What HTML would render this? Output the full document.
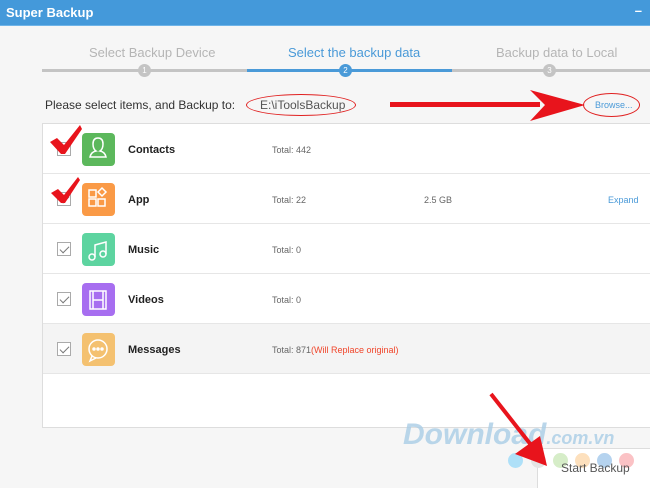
<!DOCTYPE html>
<html><head><meta charset="utf-8"><style>
*{margin:0;padding:0;box-sizing:border-box}
body{width:650px;height:484px;overflow:hidden;background:#f6f6f6;font-family:"Liberation Sans",sans-serif;position:relative}
.title{position:absolute;left:0;top:0;width:650px;height:26px;background:#4499da;color:#fff;font-weight:bold;font-size:13px;line-height:26px;padding-left:6px;border-bottom:1px solid #6fb4e8}
.a{position:absolute}
.step{font-size:13px;color:#b5b5b5;top:45px}
.list{position:absolute;left:42px;top:123px;width:620px;height:305px;background:#fff;border:1px solid #ddd}
.row{position:absolute;left:0;width:620px;height:50px;border-bottom:1px solid #e6e6e6}
.cb{position:absolute;left:14px;top:18px;width:14px;height:14px;border:1px solid #aaa;background:#fff}
.cb:after{content:"";position:absolute;left:4px;top:1px;width:4px;height:8px;border:solid #777;border-width:0 1px 1px 0;transform:rotate(45deg)}
.ic{position:absolute;left:39px;top:9px;width:33px;height:33px;border-radius:4px}
.nm{position:absolute;left:85px;top:20px;font-size:11px;font-weight:bold;color:#222}
.tt{position:absolute;left:229px;top:21px;font-size:9px;color:#666}
</style></head><body>
<div class="title">Super Backup<span style="position:absolute;right:8px;top:-2px">–</span></div>
<div class="a step" style="left:89px">Select Backup Device</div>
<div class="a step" style="left:288px;color:#4a9ad8">Select the backup data</div>
<div class="a step" style="left:496px">Backup data to Local</div>
<div class="a" style="left:42px;top:69px;width:205px;height:3px;background:#c4c4c4"></div>
<div class="a" style="left:247px;top:69px;width:205px;height:3px;background:#4a9ad8"></div>
<div class="a" style="left:452px;top:69px;width:198px;height:3px;background:#c4c4c4"></div>
<div class="a" style="left:138px;top:64px;width:13px;height:13px;border-radius:50%;background:#c4c4c4;color:#fff;font-size:8px;text-align:center;line-height:13px">1</div>
<div class="a" style="left:339px;top:64px;width:13px;height:13px;border-radius:50%;background:#4a9ad8;color:#fff;font-size:8px;text-align:center;line-height:13px">2</div>
<div class="a" style="left:543px;top:64px;width:13px;height:13px;border-radius:50%;background:#c4c4c4;color:#fff;font-size:8px;text-align:center;line-height:13px">3</div>
<div class="a" style="left:45px;top:98px;font-size:12px;color:#333">Please select items, and Backup to:</div>
<div class="a" style="left:246px;top:94px;width:110px;height:22px;border:1.5px solid #e02020;border-radius:50%"></div>
<div class="a" style="left:260px;top:98px;font-size:12px;color:#555">E:\iToolsBackup</div>
<div class="a" style="left:583px;top:93px;width:57px;height:24px;border:1.5px solid #e02020;border-radius:50%"></div>
<div class="a" style="left:595px;top:100px;font-size:9px;color:#4a9ad8">Browse...</div>
<svg class="a" style="left:390px;top:85px" width="200" height="40"><rect x="0" y="17" width="150" height="5" fill="#e8141c"/><polygon points="140,5 195,20 140,36 155,20" fill="#e8141c"/></svg>
<div class="list">
<div class="row" style="top:0"><div class="cb"></div><div class="ic" style="background:#5cb85c"></div><div class="nm">Contacts</div><div class="tt">Total: 442</div></div>
<div class="row" style="top:50px"><div class="cb"></div><div class="ic" style="background:#fa9a46"></div><div class="nm">App</div><div class="tt">Total: 22</div><div class="tt" style="left:381px">2.5 GB</div><div class="tt" style="left:565px;color:#4a9ad8">Expand</div></div>
<div class="row" style="top:100px"><div class="cb"></div><div class="ic" style="background:#5dd4a0"></div><div class="nm">Music</div><div class="tt">Total: 0</div></div>
<div class="row" style="top:150px"><div class="cb"></div><div class="ic" style="background:#a76ef0"></div><div class="nm">Videos</div><div class="tt">Total: 0</div></div>
<div class="row" style="top:200px;background:#f4f4f4"><div class="cb"></div><div class="ic" style="background:#f4c170"></div><div class="nm">Messages</div><div class="tt">Total: 871<span style="color:#f0452a">(Will Replace original)</span></div></div>
</div>
<svg class="a" style="left:81px;top:132px" width="34" height="240" fill="none" stroke="#fff" stroke-width="1.5">
<path d="M17 6 q-5 0 -5 6 q0 5 3 7 q-5 1 -6 6 h16 q-1 -5 -6 -6 q3 -2 3 -7 q0 -6 -5 -6z"/>
<rect x="8" y="58" width="7" height="7"/><rect x="8" y="67" width="7" height="7"/><rect x="17" y="67" width="7" height="7"/><path d="M21 56 l4 4 -4 4 -4 -4z"/>
<circle cx="11" cy="125" r="3"/><circle cx="22" cy="122" r="3"/><path d="M14 125 v-12 l11 -3 v12"/>
<rect x="9" y="159" width="16" height="18"/><path d="M12 159v18 M22 159v18 M12 168h10"/>
<circle cx="17" cy="217" r="9"/><path d="M11 224 l-2 5 6 -3"/><circle cx="13" cy="217" r="1" fill="#fff"/><circle cx="17" cy="217" r="1" fill="#fff"/><circle cx="21" cy="217" r="1" fill="#fff"/>
</svg>
<svg class="a" style="left:48px;top:125px" width="40" height="80">
<polygon points="2,17 9,13 16,20 32,0 34,4 17,29 13,29" fill="#e8141c"/>
<polygon points="3,68 10,64 16,70 30,52 32,55 17,78 13,78" fill="#e8141c"/>
</svg>
<div class="a" style="left:537px;top:448px;width:120px;height:40px;background:#fff;border-left:1px solid #ddd;border-top:1px solid #ddd"></div>
<div class="a" style="left:403px;top:418px;font-size:30px;font-style:italic;font-weight:bold;color:#a9cde6;opacity:.8">Download<span style="font-size:18px">.com.vn</span></div>
<div class="a" style="left:508px;top:453px;width:15px;height:15px;border-radius:50%;background:#aee0f8"></div>
<div class="a" style="left:531px;top:453px;width:15px;height:15px;border-radius:50%;background:#e4e4e4"></div>
<div class="a" style="left:553px;top:453px;width:15px;height:15px;border-radius:50%;background:#d6edc8"></div>
<div class="a" style="left:575px;top:453px;width:15px;height:15px;border-radius:50%;background:#fde0bd"></div>
<div class="a" style="left:597px;top:453px;width:15px;height:15px;border-radius:50%;background:#b5d3ef"></div>
<div class="a" style="left:619px;top:453px;width:15px;height:15px;border-radius:50%;background:#fbc2c5"></div>
<div class="a" style="left:561px;top:461px;font-size:12px;color:#555">Start Backup</div>
<svg class="a" style="left:485px;top:390px" width="70" height="80"><path d="M6 4 L50 60" stroke="#e8141c" stroke-width="4"/><polygon points="62,76 30,64 55,46" fill="#e8141c"/></svg>
</body></html>
